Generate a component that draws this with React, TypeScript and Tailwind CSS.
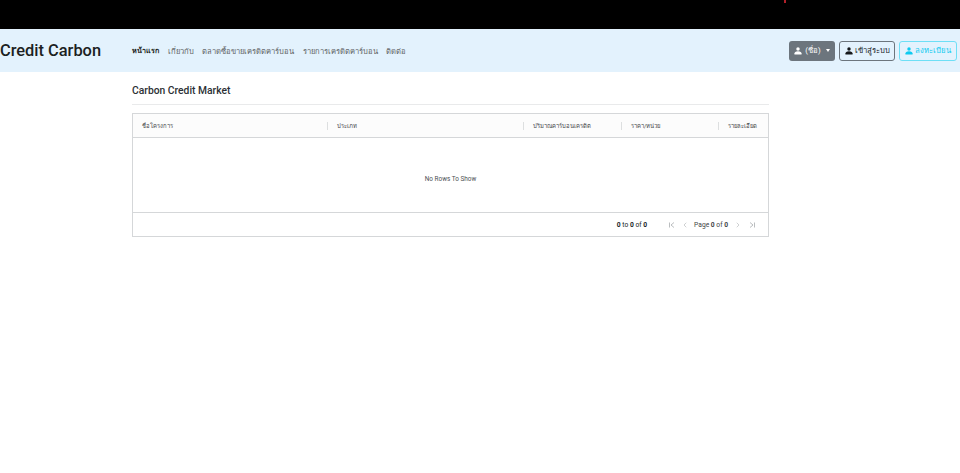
import { ChevronLeft, ChevronRight } from 'lucide-react'

function UserIcon({ className }: { className: string }) {
  return (
    <svg viewBox="0 0 16 16" fill="currentColor" className={className}>
      <circle cx="8" cy="4" r="3.5" />
      <path d="M1.500 15c-.6 0-1-.4-1-1 0-3 3-5.500 7.500-5.500s7.500 2.500 7.500 5.500c0 .6-.4 1-1 1z" />
    </svg>
  )
}

function EdgeIcon({ flip }: { flip?: boolean }) {
  return (
    <svg viewBox="0 0 8 8" fill="none" stroke="currentColor" strokeWidth="0.7" className={`h-[8px] w-[8px] ${flip ? 'rotate-180' : ''}`}>
      <path d="M1.500 1.500v5M6 1.500 3 4l3 2.500" />
    </svg>
  )
}

const navItems = ['หน้าแรก', 'เกี่ยวกับ', 'ตลาดซื้อขายเครดิตคาร์บอน', 'รายการเครดิตคาร์บอน', 'ติดต่อ']

const columns = [
  { label: 'ชื่อโครงการ', width: 'w-[194px]' },
  { label: 'ประเภท', width: 'w-[196px]' },
  { label: 'ปริมาณคาร์บอนเครดิต', width: 'w-[98px]' },
  { label: 'ราคา/หน่วย', width: 'w-[97px]' },
  { label: 'รายละเอียด', width: 'w-[49px]' },
]

export default function App() {
  return (
    <div className="min-h-[473px] bg-white font-['Roboto','Noto_Sans','Liberation_Sans',sans-serif] text-[#212529]">
      {/* top strip */}
      <div className="relative h-[29px] bg-black">
        <div className="absolute left-[784px] top-0 h-[3px] w-[2px] bg-[#b0202a]" />
      </div>

      {/* Navbar */}
      <nav className="flex h-[43px] items-center justify-between bg-[#e3f2fd] pr-[3px]">
        <div className="flex items-center pt-[2px]">
          <span className="w-[132px] text-[16.400px] font-medium leading-none text-[#1c1f22]">Credit Carbon</span>
          <ul className="flex items-center gap-[8.500px] text-[7.600px] text-[#5f6265]">
            {navItems.map((item, i) => (
              <li key={item} className={i === 0 ? 'text-[7.200px] font-semibold text-[#1c1f22]' : ''}>
                {item}
              </li>
            ))}
          </ul>
        </div>
        <div className="flex items-center gap-[4px] text-[7.700px]">
          <button className="flex h-[20px] w-[46px] items-center justify-center gap-[3px] rounded-[3px] bg-[#6c757d] text-white">
            <UserIcon className="h-[8px] w-[8px]" />
            <span>(ชื่อ)</span>
            <span className="ml-[2px] h-0 w-0 border-x-[2.500px] border-t-[3px] border-x-transparent border-t-white" />
          </button>
          <button className="flex h-[20px] w-[56px] items-center justify-center gap-[2px] rounded-[3px] border border-[#6c757d] text-[#15181b]">
            <UserIcon className="h-[8px] w-[8px]" />
            <span>เข้าสู่ระบบ</span>
          </button>
          <button className="flex h-[20px] w-[58px] items-center justify-center gap-[2px] rounded-[3px] border border-[#6edff6] text-[#0dcaf0]">
            <UserIcon className="h-[8px] w-[8px]" />
            <span>ลงทะเบียน</span>
          </button>
        </div>
      </nav>

      {/* Content */}
      <main className="ml-[132px] w-[637px] pt-[12px]">
        <h5 className="border-b border-[#e9eaeb] pb-[7px] text-[10.300px] font-medium leading-[13px] text-[#2c3034]">
          Carbon Credit Market
        </h5>

        <div className="mt-[8px] h-[124px] border border-[#d5d7d9] text-[7px] text-[#181d1f]">
          <div className="flex h-[24px] items-center border-b border-[#d5d7d9] bg-[#fcfcfc] pt-[1px] text-[5.900px] text-[#3f4447]">
            {columns.map((col, i) => (
              <div key={col.label} className={`${col.width} flex h-full items-center`}>
                <div className={`flex h-[8px] items-center pl-[9px] ${i > 0 ? 'border-l border-[#dddfe0]' : ''}`}>
                  {col.label}
                </div>
              </div>
            ))}
          </div>
          <div className="flex h-[75px] items-center justify-center border-b border-[#d5d7d9] pt-[10px] text-[6.400px] text-[#4d5154]">
            No Rows To Show
          </div>
          <div className="flex h-[23px] items-center justify-end pr-[12px] pt-[1px] text-[6.700px]">
            <span>
              <b>0</b> to <b>0</b> of <b>0</b>
            </span>
            <div className="ml-[21px] flex items-center text-[#9ea2a5]">
              <EdgeIcon />
              <ChevronLeft className="ml-[5px] h-[8px] w-[8px]" strokeWidth={1.5} />
              <span className="ml-[5px] mr-[6px] text-[#3f4447]">
                Page <b>0</b> of <b>0</b>
              </span>
              <ChevronRight className="h-[8px] w-[8px]" strokeWidth={1.5} />
              <div className="ml-[6px]">
                <EdgeIcon flip />
              </div>
            </div>
          </div>
        </div>
      </main>
    </div>
  )
}
